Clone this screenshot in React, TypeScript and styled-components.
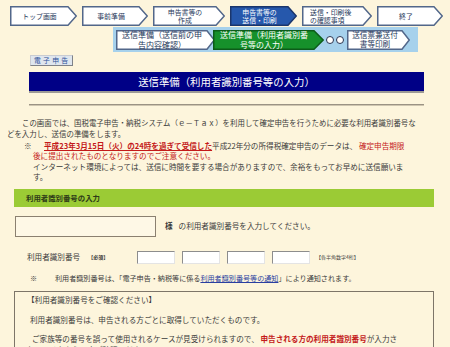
import React from 'react'
import styled, { createGlobalStyle } from 'styled-components'

const GlobalStyle = createGlobalStyle`
  html, body {
    margin: 0;
    padding: 0;
  }
  body {
    background: #fdf5dc;
    font-family: "Noto Sans CJK JP", "Noto Sans", sans-serif;
    color: #3a3a3a;
  }
`

const Page = styled.div`
  width: 450px;
  height: 347px;
  overflow: hidden;
  font-size: 7.6px;
  line-height: 10.5px;
`

/* ---- step navigation ---- */

const StepRow = styled.div`
  display: flex;
  gap: 5px;
  padding: 6px 0 0 10px;
`

const StepBox = styled.div<{ $w: number; $h: number }>`
  position: relative;
  flex: none;
  width: ${p => p.$w}px;
  height: ${p => p.$h}px;
`

const StepShape = styled.svg`
  position: absolute;
  inset: 0;
`

const StepLabel = styled.div<{ $tip: number; $color: string; $size: number; $align?: string }>`
  position: relative;
  height: 100%;
  display: flex;
  align-items: center;
  justify-content: ${p => (p.$align === 'left' ? 'flex-start' : 'center')};
  padding: 0 ${p => p.$tip + 1}px 0 ${p => (p.$align === 'left' ? 8 : 2)}px;
  box-sizing: border-box;
  font-size: ${p => p.$size}px;
  line-height: ${p => p.$size + 1.3}px;
  text-align: ${p => (p.$align === 'left' ? 'left' : 'center')};
  color: ${p => p.$color};
  white-space: nowrap;
`

type Variant = 'plain' | 'active' | 'green'

const palette: Record<Variant, { fill: string; stroke: string; text: string }> = {
  plain: { fill: '#ffffff', stroke: '#52678a', text: '#26375a' },
  active: { fill: '#2658ac', stroke: '#1b366c', text: '#ffffff' },
  green: { fill: '#16912b', stroke: '#0c5c19', text: '#ffffff' },
}

const StepArrow: React.FC<{
  w: number
  h?: number
  tip?: number
  size?: number
  variant?: Variant
  align?: string
  children: React.ReactNode
}> = ({ w, h = 20, tip = 9, size = 6.9, variant = 'plain', align, children }) => {
  const c = palette[variant]
  return (
    <StepBox $w={w} $h={h}>
      <StepShape width={w} height={h} viewBox={`0 0 ${w} ${h}`}>
        <polygon
          points={`0.75,0.75 ${w - tip},0.75 ${w - 0.75},${h / 2} ${w - tip},${h - 0.75} 0.75,${h - 0.75}`}
          fill={c.fill}
          stroke={c.stroke}
          strokeWidth={1.5}
        />
      </StepShape>
      <StepLabel $tip={tip} $color={c.text} $size={size} $align={align}>
        <span>{children}</span>
      </StepLabel>
    </StepBox>
  )
}

const SubBand = styled.div`
  display: flex;
  align-items: center;
  width: 305px;
  height: 25px;
  margin: 1px 0 0 113px;
  padding-left: 3px;
  box-sizing: border-box;
  background: #a6d1ec;
`

const Overlap = styled.div`
  margin-left: -2px;
`

const Dots = styled.div`
  display: flex;
  gap: 2px;
  margin: 0 3px 0 2px;
`

const Dot = styled.span`
  width: 6px;
  height: 6px;
  border: 1.3px solid #2a3450;
  border-radius: 50%;
  background: #ffffff;
`

/* ---- header ---- */

const Tag = styled.span`
  display: inline-block;
  margin: 3px 0 0 30px;
  padding: 0 2px 0 3px;
  height: 9px;
  line-height: 9px;
  font-size: 6.8px;
  letter-spacing: 2.3px;
  color: #2d4f98;
  background: #dfe6ee;
  border: 1px solid;
  border-color: #c9ccd2 #7f8288 #7f8288 #c9ccd2;
`

const TitleBar = styled.div`
  width: 395px;
  height: 19px;
  margin: 6px 0 0 29px;
  background: #000086;
  box-shadow: 0 2px 0 #9d9a96;
  color: #ffffff;
  font-size: 10.4px;
  line-height: 19px;
  text-align: center;
`

const Rule = styled.div`
  width: 395px;
  height: 1px;
  margin: 13px 0 0 29px;
  background: #9b9384;
  border-bottom: 1px solid #cfc6b0;
`

/* ---- text blocks ---- */

const Intro = styled.p`
  margin: 12px 0 0 7px;
  font-size: 7.45px;
  white-space: nowrap;
  text-indent: 15px;
`

const NoteBlock = styled.div<{ $left: number; $size?: number; $top?: number }>`
  margin: ${p => p.$top ?? 2}px 0 0 ${p => p.$left}px;
  font-size: ${p => p.$size ?? 7.6}px;
  line-height: 10.3px;
  white-space: nowrap;
`

const NoteLine = styled.div<{ $pad?: number }>`
  padding-left: ${p => p.$pad ?? 0}px;
`

const Mark = styled.span<{ $w: number }>`
  display: inline-block;
  width: ${p => p.$w}px;
`

const Warn = styled.span<{ $strong?: boolean; $line?: boolean }>`
  color: #c41a1a;
  font-weight: ${p => (p.$strong ? 'bold' : 'normal')};
  text-decoration: ${p => (p.$line ? 'underline' : 'none')};
`

const Link = styled.a`
  color: #2a3fa0;
  text-decoration: underline;
`

/* ---- form ---- */

const SectionHead = styled.div`
  width: 420px;
  height: 18px;
  margin: 7px 0 0 14px;
  padding-left: 12px;
  box-sizing: border-box;
  background: #9bcb35;
  color: #2e3a18;
  font-weight: bold;
  font-size: 7.4px;
  line-height: 18px;
`

const NameRow = styled.div`
  display: flex;
  align-items: center;
  margin: 9px 0 0 15px;
`

const NameBox = styled.div`
  width: 141px;
  height: 21px;
  box-sizing: border-box;
  border: 1px solid #8b8070;
  background: #fef8e6;
`

const Sama = styled.span`
  margin: 0 6px 0 9px;
  font-weight: bold;
`

const IdRow = styled.div`
  display: flex;
  align-items: center;
  margin: 14px 0 0 27px;
`

const IdLabel = styled.div`
  flex: none;
  width: 110px;
  display: flex;
  align-items: center;
`

const Required = styled.span`
  margin-left: 8px;
  font-size: 5px;
  font-weight: bold;
  color: #333;
`

const Inputs = styled.div`
  display: flex;
  gap: 7px;
`

const IdInput = styled.div`
  width: 38px;
  height: 13px;
  box-sizing: border-box;
  background: #ffffff;
  border: 1px solid;
  border-color: #8d8d8d #e4e4e4 #e4e4e4 #8d8d8d;
`

const Hint = styled.span`
  margin-left: 6px;
  font-size: 5px;
  color: #444;
`

const InfoBox = styled.div`
  width: 420px;
  height: 80px;
  margin: 8px 0 0 14px;
  padding: 3px 0 0 12px;
  box-sizing: border-box;
  border: 1px solid #7d7568;
`

const InfoPara = styled.p<{ $indent: number }>`
  margin: 9px 0 0;
  text-indent: ${p => p.$indent}px;
  white-space: nowrap;
  &:first-child {
    margin-top: 0;
  }
`

const App: React.FC = () => (
  <Page>
    <GlobalStyle />
    <StepRow>
      <StepArrow w={67}>トップ画面</StepArrow>
      <StepArrow w={66}>事前準備</StepArrow>
      <StepArrow w={72}>
        申告書等の
        <br />
        作成
      </StepArrow>
      <StepArrow w={67} variant="active">
        申告書等の
        <br />
        送信・印刷
      </StepArrow>
      <StepArrow w={70} align="left">
        送信・印刷後
        <br />
        の確認事項
      </StepArrow>
      <StepArrow w={66}>終了</StepArrow>
    </StepRow>

    <SubBand>
      <StepArrow w={99} tip={8} size={8}>
        送信準備（送信前の申
        <br />
        告内容確認）
      </StepArrow>
      <Overlap>
        <StepArrow w={111} tip={10} size={8} variant="green">
          送信準備（利用者識別番
          <br />
          号等の入力）
        </StepArrow>
      </Overlap>
      <Dots>
        <Dot />
        <Dot />
      </Dots>
      <StepArrow w={63} tip={8} size={7.6}>
        送信票兼送付
        <br />
        書等印刷
      </StepArrow>
    </SubBand>

    <Tag>電子申告</Tag>
    <TitleBar>送信準備（利用者識別番号等の入力）</TitleBar>
    <Rule />

    <Intro>
      この画面では、国税電子申告・納税システム（ｅ－Ｔａｘ）を利用して確定申告を行うために必要な利用者識別番号な
      <br />
      どを入力し、送信の準備をします。
    </Intro>

    <NoteBlock $left={24}>
      <NoteLine>
        <Mark $w={20}>※</Mark>
        <Warn $strong $line>平成23年3月15日（火）の24時を過ぎて受信した</Warn>
        平成22年分の所得税確定申告のデータは、 <Warn>確定申告期限</Warn>
      </NoteLine>
      <NoteLine $pad={9}>
        <Warn>後に提出されたものとなりますのでご注意ください。</Warn>
      </NoteLine>
      <NoteLine $pad={9}>
        　インターネット環境によっては、送信に時間を要する場合がありますので、余裕をもってお早めに送信願いま
      </NoteLine>
      <NoteLine $pad={9}>す。</NoteLine>
    </NoteBlock>

    <SectionHead>利用者識別番号の入力</SectionHead>

    <NameRow>
      <NameBox />
      <Sama>様</Sama>
      の利用者識別番号を入力してください。
    </NameRow>

    <IdRow>
      <IdLabel>
        利用者識別番号
        <Required>【必須】</Required>
      </IdLabel>
      <Inputs>
        <IdInput />
        <IdInput />
        <IdInput />
        <IdInput />
      </Inputs>
      <Hint>【各半角数字4桁】</Hint>
    </IdRow>

    <NoteBlock $left={30} $size={7.1} $top={9}>
      <NoteLine>
        <Mark $w={25}>※</Mark>
        利用者識別番号は、「電子申告・納税等に係る<Link href="#">利用者識別番号等の通知</Link>」により通知されます。
      </NoteLine>
    </NoteBlock>

    <InfoBox>
      <InfoPara $indent={0}>【利用者識別番号をご確認ください】</InfoPara>
      <InfoPara $indent={3}>利用者識別番号は、申告される方ごとに取得していただくものです。</InfoPara>
      <InfoPara $indent={5}>
        ご家族等の番号を誤って使用されるケースが見受けられますので、 <Warn $strong>申告される方の利用者識別番号</Warn>が入力さ
        <br />
        れているかもう一度ご確認ください。
      </InfoPara>
    </InfoBox>
  </Page>
)

export default App
